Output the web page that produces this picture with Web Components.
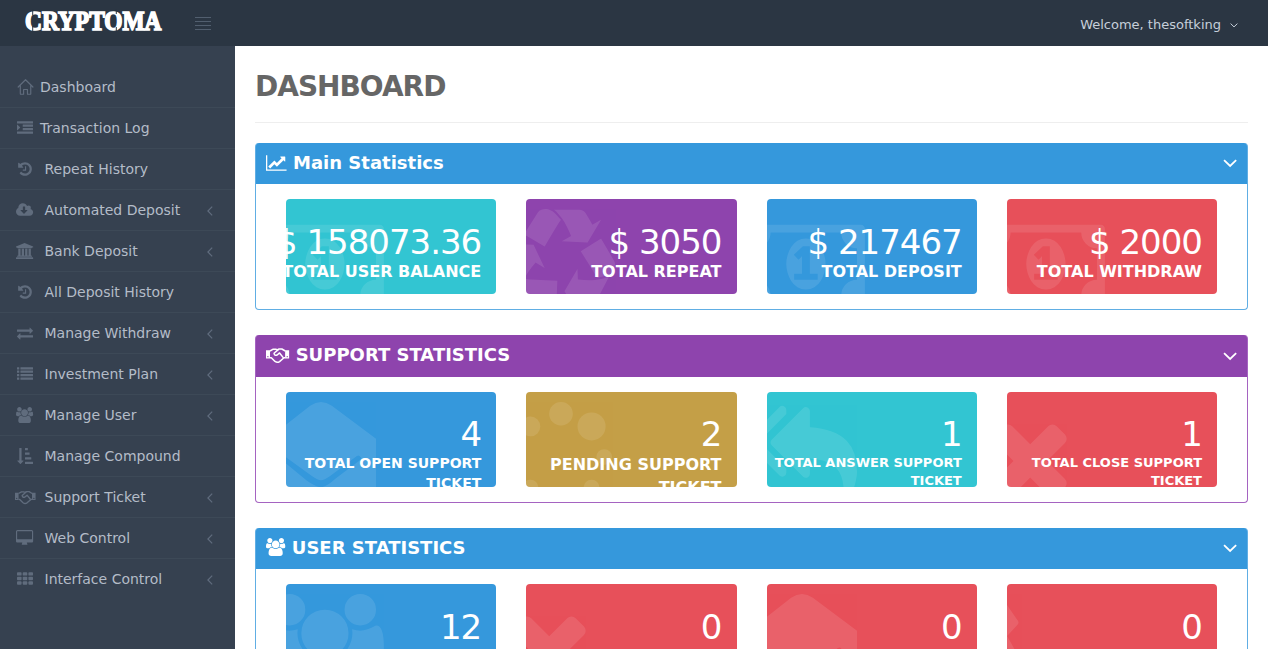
<!DOCTYPE html>
<html lang="en">
<head>
<meta charset="utf-8">
<title>Cryptoma Dashboard</title>
<style>
html, body { margin: 0; height: 100%; overflow: hidden; background: #364150; }
body { font-family: "DejaVu Sans", sans-serif; font-size: 14px; line-height: 1.42857; color: #333; }
</style>
</head>
<body>
<dash-app></dash-app>
<script>
const r = (x, y, w, h, rx = 32) => `<rect x="${x}" y="${y}" width="${w}" height="${h}" rx="${rx}"/>`;
const c = (x, y, rad) => `<circle cx="${x}" cy="${y}" r="${rad}"/>`;
const p = d => `<path d="${d}"/>`;
const handshake = `<path fill-rule="evenodd" d="M0 430H400V1240H0ZM120 1060A70 70 0 1 0 260 1060A70 70 0 1 0 120 1060ZM1904 430H2304V1240H1904ZM2044 1060A70 70 0 1 0 2184 1060A70 70 0 1 0 2044 1060Z"/><g fill="none" stroke="currentColor" stroke-width="150" stroke-linejoin="round"><path d="M400 500L720 320H960L1130 380L1300 300H1580L1920 500M400 1170H530L900 1540Q1130 1700 1350 1550L1790 1170H1920"/><path d="M1250 340L800 720Q830 1000 1110 900L1350 690L1740 1180"/></g>`;
/* name: [viewBox, markup] */
const ICONS = {
  home: ['-60 0 1792 1792', `<path fill="none" stroke="currentColor" stroke-width="130" stroke-linejoin="round" stroke-linecap="round" d="M70 900L896 80L1722 900M310 720V1640Q310 1710 380 1710H680V1180H1112V1710H1412Q1482 1710 1482 1640V720"/>`],
  indent: ['0 0 1792 1792', p('M352 832q0 14-9 23l-288 288q-9 9-23 9-13 0-22.5-9.5t-9.5-22.5v-576q0-13 9.5-22.5t22.5-9.5q14 0 23 9l288 288q9 9 9 23z') + r(0,128,1792,256) + r(640,512,1152,256) + r(640,896,1152,256) + r(0,1280,1792,256)],
  history: ['0 0 1792 1792', p('M1664 896q0 156-61 298t-164 245-245 164-298 61q-172 0-327-72.5t-264-204.5q-7-10-6.5-22.5t8.5-20.5l137-138q10-9 25-9 16 2 23 12 73 95 179 147t225 52q104 0 198.5-40.5t163.5-109.5 109.5-163.5 40.5-198.5-40.5-198.5-109.5-163.5-163.5-109.5-198.5-40.5q-98 0-188 35.5t-160 101.5l137 138q31 30 14 69-17 40-59 40h-448q-26 0-45-19t-19-45v-448q0-42 40-59 39-17 69 14l130 129q107-101 244.5-156.5t284.5-55.5q156 0 298 61t245 164 164 245 61 298zm-640-288v448q0 14-9 23t-23 9h-320q-14 0-23-9t-9-23v-64q0-14 9-23t23-9h224v-352q0-14 9-23t23-9h64q14 0 23 9t9 23z')],
  cloud: ['0 0 1920 1792', p('M1280 928q0-14-9-23t-23-9h-224v-352q0-13-9.5-22.5t-22.5-9.5h-192q-13 0-22.5 9.5t-9.5 22.5v352h-224q-13 0-22.5 9.5t-9.5 22.5q0 14 9 23l352 352q9 9 23 9t23-9l351-351q10-12 10-24zm640 224q0 159-112.5 271.5t-271.5 112.5h-1088q-185 0-316.5-131.5t-131.5-316.5q0-130 70-240t188-165q-2-30-2-43 0-212 150-362t362-150q156 0 285.5 87t188.5 231q71-62 166-62 106 0 181 75t75 181q0 76-41 138 130 31 213.5 135.5t83.5 238.5z')],
  bank: ['0 0 1920 1792', p('M960 0l960 384v128h-128q0 26-20.5 45t-48.5 19h-1526q-28 0-48.5-19t-20.5-45h-128v-128zm-704 640h256v768h128v-768h256v768h128v-768h256v768h128v-768h256v768h59q28 0 48.5 19t20.5 45v64h-1664v-64q0-26 20.5-45t48.5-19h59v-768zm1595 960q28 0 48.5 19t20.5 45v128h-1920v-128q0-26 20.5-45t48.5-19h1782z')],
  exchange: ['0 0 1792 1792', p('M1792 1184v192q0 13-9.5 22.5t-22.5 9.5h-1376v192q0 13-9.5 22.5t-22.5 9.5q-12 0-24-10l-319-320q-9-9-9-22 0-14 9-23l320-320q9-9 23-9 13 0 22.5 9.5t9.5 22.5v192h1376q13 0 22.5 9.5t9.5 22.5zm0-544q0 14-9 23l-320 320q-9 9-23 9-13 0-22.5-9.5t-9.5-22.5v-192h-1376q-13 0-22.5-9.5t-9.5-22.5v-192q0-13 9.5-22.5t22.5-9.5h1376v-192q0-14 9-23t23-9q12 0 24 10l319 319q9 9 9 23z')],
  list: ['0 0 1792 1792', [128,512,896,1280].map(y => r(0,y,256,256) + r(384,y,1408,256)).join('')],
  users: ['0 0 1920 1792', p('M593 896q-162 5-265 128h-134q-82 0-138-40.5t-56-118.5q0-353 124-353 6 0 43.5 21t97.5 42.5 119 21.5q67 0 133-23-5 37-5 66 0 139 81 256zm1071 637q0 120-73 189.5t-194 69.5h-874q-121 0-194-69.5t-73-189.5q0-53 3.5-103.5t14-109 26.5-108.5 43-97.5 62-81 85.5-53.5 111.5-20q10 0 43 21.5t73 48 107 48 135 21.5 135-21.5 107-48 73-48 43-21.5q61 0 111.5 20t85.5 53.5 62 81 43 97.5 26.5 108.5 14 109 3.5 103.5zm-1024-1277q0 106-75 181t-181 75-181-75-75-181 75-181 181-75 181 75 75 181zm704 384q0 159-112.5 271.5t-271.5 112.5-271.5-112.5-112.5-271.5 112.5-271.5 271.5-112.5 271.5 112.5 112.5 271.5zm576 225q0 78-56 118.5t-138 40.5h-134q-103-123-265-128 81-117 81-256 0-29-5-66 66 23 133 23 59 0 119-21.5t97.5-42.5 43.5-21q124 0 124 353zm-128-609q0 106-75 181t-181 75-181-75-75-181 75-181 181-75 181 75 75 181z')],
  sort: ['0 0 1792 1792', p('M736 1440q0 12-10 24l-319 319q-10 9-23 9-12 0-23-9l-320-320q-15-16-7-35 8-20 30-20h192v-1376q0-14 9-23t23-9h192q14 0 23 9t9 23v1376h192q14 0 23 9t9 23z') + r(896,0,320,256) + r(896,512,512,256) + r(896,1024,704,256) + r(896,1536,896,256)],
  handshake: ['0 0 2304 1792', handshake],
  desktop: ['-64 0 1920 1792', p('M1728 992v-832q0-13-9.5-22.5t-22.5-9.5h-1600q-13 0-22.5 9.5t-9.5 22.5v832q0 13 9.5 22.5t22.5 9.5h1600q13 0 22.5-9.5t9.5-22.5zm128-832v1088q0 66-47 113t-113 47h-544q0 37 16 77.5t32 71 16 43.5q0 26-19 45t-45 19h-512q-26 0-45-19t-19-45q0-14 16-44t32-70 16-78h-544q-66 0-113-47t-47-113v-1088q0-66 47-113t113-47h1600q66 0 113 47t47 113z')],
  th: ['0 0 1792 1792', [128,640,1152].map(y => [0,640,1280].map(x => r(x,y,512,384,96)).join('')).join('')],
  chart: ['0 0 2048 1792', p('M2048 1536v128h-2048v-1536h128v1408h1920zm-128-1248v435q0 21-19.5 29.5t-35.5-7.5l-121-121-633 633q-10 10-23 10t-23-10l-233-233-416 416-192-192 585-585q10-10 23-10t23 10l233 233 464-464-121-121q-16-16-7.5-35.5t29.5-19.5h435q14 0 23 9t9 23z')],
  money: ['0 0 1920 1792', p('M768 1152h384v-96h-128v-448h-114l-148 137 77 80q42-37 55-57h2v288h-128v96zm512-256q0 70-21 142t-59.5 134-101.5 101-138 39-138-39-101.5-101-59.5-134-21-142 21-142 59.5-134 101.5-101 138-39 138 39 101.5 101 59.5 134 21 142zm512 256v-512q-106 0-181-75t-75-181h-1152q0 106-75 181t-181 75v512q106 0 181 75t75 181h1152q0-106 75-181t181-75zm128-832v1152q0 26-19 45t-45 19h-1792q-26 0-45-19t-19-45v-1152q0-26 19-45t45-19h1792q26 0 45 19t19 45z')],
  recycle: ['0 0 1792 1792', p('M836 1169l-15 368-2 22-420-29q-36-3-67-31.5t-47-65.5q-11-27-14.5-55t4-65 12-55 21.5-64 19-53q78 12 509 28zm-387-586l180 379-147-92q-63 72-111.5 144.5t-72.5 125-39.5 94.5-18.5 63l-4 21-190-357q-17-26-18-56t6-47l8-18q35-63 114-188l-140-86zm1231 517l-188 359q-12 29-36.5 46.5t-43.5 20.5l-18 4q-71 7-219 12l8 164-230-367 211-362 7 173q170 16 283 5t170-33zm-785-924q-47 63-265 435l-317-187-19-12 225-356q20-31 60-45t80-10q24 2 48.5 12t42 21 41.5 33 36 34.5 36 39.5 32 35zm655 307l212 363q18 37 12.5 76t-27.5 74q-13 20-33 37t-38 28-48.5 22-47 16-51.5 14-46 12q-34-72-265-436l313-195zm-143-226l142-83-220 373-419-20 151-86q-34-89-75-166t-75.5-123.5-64.5-80-47-46.5l-17-13 405 1q31-3 58 10.5t39 28.5l11 15q39 61 112 190z')],
  envelope: ['0 0 1792 1792', `<path fill-rule="evenodd" d="M0 630L720 60Q896 -60 1072 60L1792 600V1632Q1792 1792 1632 1792H160Q0 1792 0 1632ZM1544 900Q1560 920 1540 940L1130 1250Q980 1388 896 1388Q812 1388 662 1280L252 940Q230 920 250 890L292 875L742 1200Q850 1274 896 1274Q942 1274 1050 1200L1480 880Q1520 860 1544 900Z"/>`],
  spinner: ['0 0 1792 1792', c(896,192,192) + c(1394,398,228) + c(398,398,160) + c(1600,896,128) + c(192,896,128) + c(1394,1394,128) + c(398,1394,128) + c(896,1600,128)],
  replyall: ['0 0 1792 1792', p('M640 1082v70q0 42-39 59-13 5-25 5-27 0-45-19l-512-512q-19-19-19-45t19-45l512-512q29-31 70-14 39 17 39 59v69l-397 398q-19 19-19 45t19 45zm1152 58q0 58-17 133.5t-38.5 138-48 125-40.5 90.5l-20 40q-8 17-28 17-6 0-9-1-25-8-23-34 43-400-106-565-64-71-170.5-110.5t-267.5-52.5v251q0 42-39 59-13 5-25 5-27 0-45-19l-512-512q-19-19-19-45t19-45l512-512q29-31 70-14 39 17 39 59v262q411 28 599 221 169 173 169 509z')],
  times: ['192 0 1408 1792', p('M1490 1322q0 40-28 68l-136 136q-28 28-68 28t-68-28l-294-294-294 294q-28 28-68 28t-68-28l-136-136q-28-28-28-68t28-68l294-294-294-294q-28-28-28-68t28-68l136-136q28-28 68-28t68 28l294 294 294-294q28-28 68-28t68 28l136 136q28 28 28 68t-28 68l-294 294 294 294q28 28 28 68z')],
  star: ['0 0 768 1792', p('M200 0L506 440Q522 466 500 495L328 685L560 1100V1792H0V0Z')],
  left: ['0 0 6 10', `<path fill="none" stroke="currentColor" stroke-width="1.2" d="M5.2 .6L.9 5L5.2 9.4"/>`],
  down: ['0 0 16 9', `<path fill="none" stroke="currentColor" stroke-width="2" d="M1.2 1.2L8 7.8L14.8 1.2"/>`]
};

function define(name, html, setup) {
  const t = document.createElement('template');
  t.innerHTML = html;
  customElements.define(name, class extends HTMLElement {
    connectedCallback() {
      if (this.shadowRoot) return;
      const root = this.attachShadow({ mode: 'open' });
      root.append(t.content.cloneNode(true));
      if (setup) setup(this, root);
    }
  });
}

define('dash-icon', `<style>:host{display:block;height:1em;flex:none;line-height:0}svg{height:100%;display:block;fill:currentColor;overflow:visible}</style>`, (el, root) => {
  const [vb, body] = ICONS[el.getAttribute('name')];
  const [, , w, h] = vb.split(' ').map(Number);
  root.innerHTML += `<svg viewBox="${vb}" style="width:${w / h}em">${body}</svg>`;
});

define('top-bar', `<style>
:host{display:flex;height:46px;flex:none;background:#2b3643;align-items:center;box-sizing:border-box;padding:0 30px 0 24px;position:relative;z-index:1}
.logo{display:block;width:139px;height:24px;margin-top:-4px;overflow:visible}
.toggle{width:16px;margin-left:32px;display:grid;gap:3px}
.toggle i{height:1px;background:#525f6f}
.user{margin-left:auto;display:flex;align-items:center;gap:9px;font-size:13px;color:#c6cfda;padding-top:4px}
.user dash-icon{font-size:4.5px}
</style>
<svg class="logo" viewBox="0 0 139 24"><text x="1" y="21" textLength="136.5" lengthAdjust="spacingAndGlyphs" font-family="Liberation Serif, serif" font-weight="700" font-size="28" fill="#fff" stroke="#fff" stroke-width="1.7">CRYPTOMA</text><path d="M8.7 0V6M8.7 17V23M92.3 0V5M92.3 18V23" stroke="#2b3643" stroke-width="1"/></svg>
<div class="toggle"><i></i><i></i><i></i><i></i></div>
<div class="user"><span>Welcome, thesoftking</span><dash-icon name="down"></dash-icon></div>`);

define('menu-item', `<style>
:host{display:flex;height:41px;box-sizing:border-box;border-top:1px solid #3d4957;padding:2px 22px 0 15px;align-items:center;color:#b4bcc8;font-size:14px}
:host(:first-of-type){border-color:transparent}
.i{width:20px;margin-right:9.5px;display:flex;justify-content:center;color:#606c7d;font-size:16px;margin-top:-2px}
:host([tight]) .i{margin-right:5px}
.arrow{margin-left:auto;color:#606c7d;font-size:10px;margin-top:-1px}
</style><span class="i"></span><slot></slot>`, (el, root) => {
  root.querySelector('.i').innerHTML = `<dash-icon name="${el.getAttribute('icon')}"></dash-icon>`;
  if (el.hasAttribute('more')) {
    const a = document.createElement('dash-icon');
    a.className = 'arrow';
    a.setAttribute('name', 'left');
    root.append(a);
  }
});

define('side-bar', `<style>:host{display:block;width:235px;flex:none;background:#364150;padding-top:20px;box-sizing:border-box}</style>
<menu-item icon="home" tight>Dashboard</menu-item>
<menu-item icon="indent" tight>Transaction Log</menu-item>
<menu-item icon="history">Repeat History</menu-item>
<menu-item icon="cloud" more>Automated Deposit</menu-item>
<menu-item icon="bank" more>Bank Deposit</menu-item>
<menu-item icon="history">All Deposit History</menu-item>
<menu-item icon="exchange" more>Manage Withdraw</menu-item>
<menu-item icon="list" more>Investment Plan</menu-item>
<menu-item icon="users" more>Manage User</menu-item>
<menu-item icon="sort">Manage Compound</menu-item>
<menu-item icon="handshake" more>Support Ticket</menu-item>
<menu-item icon="desktop" more>Web Control</menu-item>
<menu-item icon="th" more>Interface Control</menu-item>`);

define('stat-card', `<style>
:host{display:block;position:relative;height:95px;overflow:hidden;border-radius:4px;color:#fff;background:var(--tone)}
.visual{position:absolute;left:-20px;top:10px;font-size:110px;opacity:.1}
.details{position:relative;display:flex;flex-direction:column;align-items:flex-end;padding:24.6px 15px 0 0;white-space:nowrap;text-align:right}
.number{font-size:34px;line-height:36px;letter-spacing:-1px;font-weight:400;margin-bottom:1.3px}
.desc{font-weight:700;font-size:var(--size,16px);line-height:1.42857}
</style><div class="visual"></div><div class="details"><div class="number"></div><div class="desc"><slot></slot></div></div>`, (el, root) => {
  const tones = { blue: '#3598dc', red: '#e7505a', green: '#32c5d2', purple: '#8e44ad', gold: '#c49f47' };
  el.style.setProperty('--tone', tones[el.getAttribute('tone')]);
  if (el.hasAttribute('size')) el.style.setProperty('--size', el.getAttribute('size') + 'px');
  root.querySelector('.visual').innerHTML = `<dash-icon name="${el.getAttribute('icon')}"></dash-icon>`;
  root.querySelector('.number').textContent = el.getAttribute('value');
});

define('stat-panel', `<style>
:host{display:block;box-sizing:border-box;height:167.4px;border:1px solid #60aee4;border-top:0;border-radius:4px;margin-bottom:25px;--c:#3598dc}
:host([purple]){--c:#8e44ad;border-color:#a563c1}
header{height:41.4px;background:var(--c);color:#fff;display:flex;align-items:center;border-radius:3px 3px 0 0;padding:0 10px;box-sizing:border-box;font-size:18px;font-weight:700;gap:6.5px}
header .i{margin-top:-2px}
header .t{margin-top:-2px}
header .s{margin-left:auto;font-size:8px;margin-top:-1px}
.g{display:grid;grid-template-columns:repeat(4,1fr);gap:30px;padding:15px 30px}
</style><header><span class="i"></span><span class="t"></span><dash-icon class="s" name="down"></dash-icon></header><div class="g"><slot></slot></div>`, (el, root) => {
  root.querySelector('.i').innerHTML = `<dash-icon name="${el.getAttribute('icon')}"></dash-icon>`;
  root.querySelector('.t').textContent = el.getAttribute('heading');
});

define('page-content', `<style>
:host{display:block;flex:1;min-width:0;background:#fff;padding:20px 20px 0;box-sizing:border-box}
h1{margin:0 0 20px;height:57px;box-sizing:border-box;border-bottom:1px solid #eee;font-size:28px;line-height:42px;letter-spacing:-1px;color:#666;font-weight:700}
</style><h1>DASHBOARD</h1>
<stat-panel icon="chart" heading="Main Statistics">
<stat-card tone="green" icon="money" value="$ 158073.36">TOTAL USER BALANCE</stat-card>
<stat-card tone="purple" icon="recycle" value="$ 3050">TOTAL REPEAT</stat-card>
<stat-card tone="blue" icon="money" value="$ 217467">TOTAL DEPOSIT</stat-card>
<stat-card tone="red" icon="money" value="$ 2000">TOTAL WITHDRAW</stat-card>
</stat-panel>
<stat-panel purple icon="handshake" heading="SUPPORT STATISTICS">
<stat-card tone="blue" size="14" icon="envelope" value="4">TOTAL OPEN SUPPORT<br>TICKET</stat-card>
<stat-card tone="gold" icon="spinner" value="2">PENDING SUPPORT<br>TICKET</stat-card>
<stat-card tone="green" size="13" icon="replyall" value="1">TOTAL ANSWER SUPPORT<br>TICKET</stat-card>
<stat-card tone="red" size="13" icon="times" value="1">TOTAL CLOSE SUPPORT<br>TICKET</stat-card>
</stat-panel>
<stat-panel icon="users" heading="USER STATISTICS">
<stat-card tone="blue" icon="users" value="12"></stat-card>
<stat-card tone="red" icon="times" value="0"></stat-card>
<stat-card tone="red" icon="envelope" value="0"></stat-card>
<stat-card tone="red" icon="star" value="0"></stat-card>
</stat-panel>`);

define('dash-app', `<style>:host{display:flex;flex-direction:column;height:100vh;overflow:hidden}.row{display:flex;flex:1;min-height:0}</style>
<top-bar></top-bar><div class="row"><side-bar></side-bar><page-content></page-content></div>`);
</script>
</body>
</html>
